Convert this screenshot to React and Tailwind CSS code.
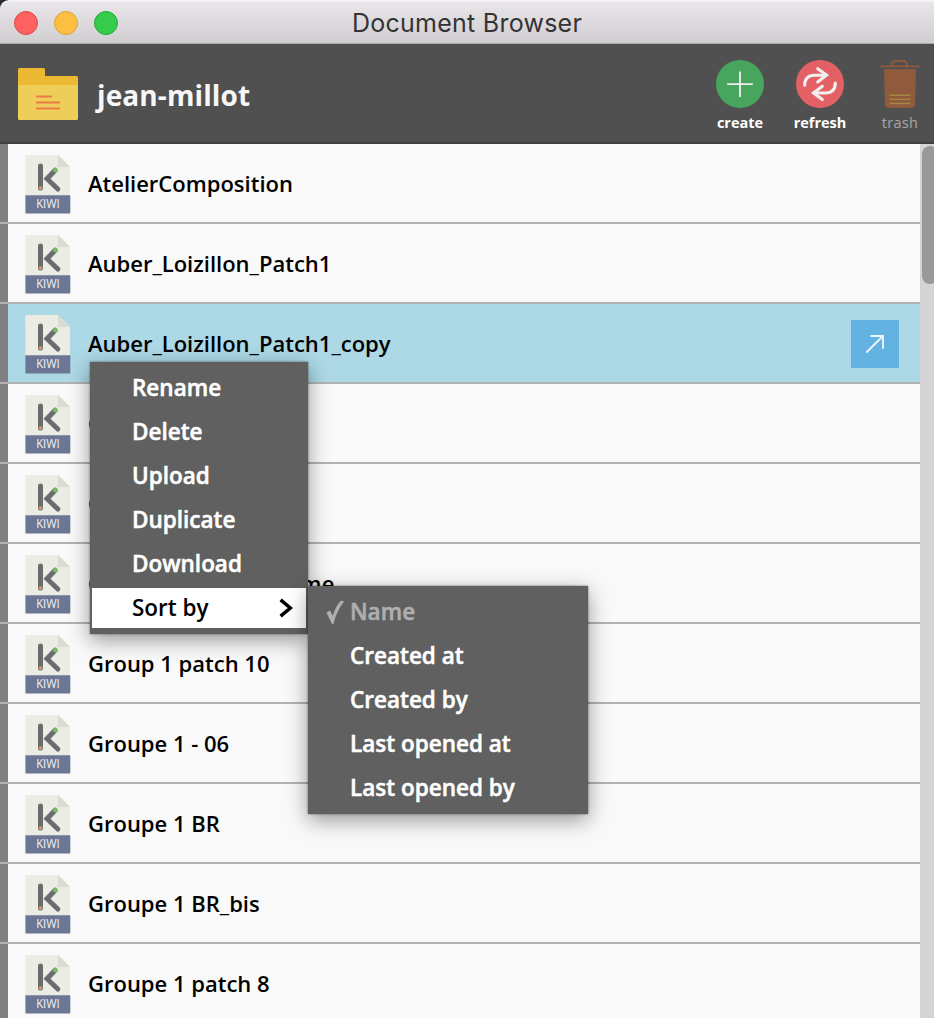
const files = [
  { name: "AtelierComposition" },
  { name: "Auber_Loizillon_Patch1" },
  { name: "Auber_Loizillon_Patch1_copy", selected: true },
  { name: "Group 1" },
  { name: "Group 1" },
  { name: "Group 1 guitar volume", wide: true },
  { name: "Group 1 patch 10" },
  { name: "Groupe 1 - 06" },
  { name: "Groupe 1 BR" },
  { name: "Groupe 1 BR_bis" },
  { name: "Groupe 1 patch 8" },
];

function FolderIcon() {
  return (
    <svg width="60" height="52" viewBox="0 0 60 52" className="block shrink-0">
      <path d="M1.5 0H25.5Q27 0 27 1.5V8H58.5Q60 8 60 9.5V20H0V1.5Q0 0 1.5 0Z" fill="#ebb932" />
      <path d="M0 17H60V50.5Q60 52 58.5 52H1.5Q0 52 0 50.5Z" fill="#eecd58" />
      <path d="M18.8 28.4H33.2M18.8 34.6H41.2M18.8 40.6H41.2" stroke="#ee7b46" strokeWidth="2" strokeLinecap="round" />
    </svg>
  );
}

function CreateIcon() {
  return (
    <svg width="48" height="48" viewBox="0 0 48 48" className="block">
      <circle cx="24" cy="24" r="24" fill="#48a55d" />
      <path d="M24 11.5V37M11.2 24.2H36.8" stroke="#efefef" strokeWidth="1.8" />
    </svg>
  );
}

function RefreshIcon() {
  return (
    <svg width="48" height="48" viewBox="0 0 48 48" className="block">
      <circle cx="24" cy="24" r="24" fill="#e36164" />
      <g fill="none" stroke="#efefef" strokeWidth="3.1" strokeLinecap="round">
        <path d="M8.7 25.2Q8.8 15.3 18.5 15.2H30" />
        <path d="M21.7 8.7L30.5 15L21.7 22" />
        <path d="M39.3 23Q39.2 32.9 29.5 33H18" />
        <path d="M26.3 26.2L17.5 33L26.3 39.5" />
      </g>
    </svg>
  );
}

function TrashIcon() {
  return (
    <svg width="40" height="48" viewBox="0 0 40 48" className="block">
      <path d="M.6 6.3H39.4M11.5 6V5Q11.8 1 15.6 1H23.2Q26.6 1 26.8 5V6" fill="none" stroke="#905a3c" strokeWidth="1.8" />
      <path d="M4 9.3H36L35 44.5Q34.9 48 31.5 48H8.5Q5.1 48 5 44.5Z" fill="#905a3c" />
      <path d="M10 35.3H30M10 39.4H30M10 43.5H30" stroke="#a28742" strokeWidth="1.4" strokeLinecap="round" />
    </svg>
  );
}

function KiwiIcon() {
  return (
    <svg width="46" height="59" viewBox="0 0 46 59" className="block shrink-0">
      <path d="M1 0H33L45 12V41H.4V1Q.4 0 1 0Z" fill="#ebece3" />
      <path d="M33 0V12H45Z" fill="#dadbd1" />
      <path d="M.4 40.3H45.3V57.4Q45.3 58.6 44.1 58.6H1.6Q.4 58.6 .4 57.4Z" fill="#6b7794" />
      <path d="M15.5 11V33M30.2 15.2L22 23.7L32.8 34" fill="none" stroke="#6a6c6d" strokeWidth="5" strokeLinecap="round" />
      <circle cx="15.6" cy="33" r="1.8" fill="#f0945c" />
      <circle cx="30.3" cy="15.2" r="2.2" fill="#72c35b" />
      <text x="22.9" y="53.1" textAnchor="middle" textLength="23.5" lengthAdjust="spacingAndGlyphs" fill="#f3f4f7" fontFamily="Open Sans, sans-serif" fontSize="12">KIWI</text>
    </svg>
  );
}

function Tool({ icon, label, className }) {
  return (
    <div className={"flex w-20 flex-col items-center " + className}>
      {icon}
      <span className="mt-[5px] text-[14.5px] leading-[20px]">{label}</span>
    </div>
  );
}

function FileRow({ name, selected, wide }) {
  return (
    <div className="flex h-20 shrink-0 border-b-2 border-[#b2b2b2]">
      <div className="w-2 shrink-0 bg-[#808080]" />
      <div className={"flex flex-1 items-start pt-[11px] pl-[17px] " + (selected ? "bg-[#add8e6]" : "bg-[#f9f9f9]")}>
        <KiwiIcon />
        <span className={"mt-[13px] ml-[17px] flex-1 whitespace-nowrap text-[22px] leading-[30px] font-semibold text-black " + (wide ? "tracking-[0.4px]" : "")}>{name}</span>
        {selected && (
          <div className="mt-[5px] mr-[21px] h-12 w-12 bg-[#63b3e2]">
            <svg width="48" height="48" viewBox="0 0 48 48" className="block">
              <path d="M15.3 32.5L32 16M19.5 16H32V28.7" fill="none" stroke="#eef6fb" strokeWidth="1.9" />
            </svg>
          </div>
        )}
      </div>
    </div>
  );
}

export default function App() {
  return (
    <div className="relative flex h-[1018px] w-[934px] flex-col overflow-hidden bg-[#2a2c38] font-['Open_Sans',sans-serif]">
      <div className="relative flex h-11 shrink-0 items-center rounded-tl-[9px] border-t-2 border-b border-t-[#f3f1f3] border-b-[#aaa9aa] bg-linear-to-b from-[#e8e6e8] to-[#d0ced0]">
        <div className="ml-[14px] flex gap-4">
          <span className="h-6 w-6 rounded-full border border-[#e2484a] bg-[#fd6260]" />
          <span className="h-6 w-6 rounded-full border border-[#dfa03a] bg-[#fdbf41]" />
          <span className="h-6 w-6 rounded-full border border-[#26a935] bg-[#35cb4b]" />
        </div>
        <span className="ml-[234px] whitespace-nowrap font-[Inter,sans-serif] text-[25px] leading-8 tracking-[0.25px] text-[#353335]">Document Browser</span>
      </div>
      <header className="flex h-[100px] shrink-0 items-start border-b-2 border-[#3f3f3f] bg-[#505050] pl-[18px]">
        <div className="mt-6"><FolderIcon /></div>
        <h1 className="mt-[31px] ml-[19px] flex-1 text-[28px] leading-[40px] font-bold tracking-[0.1px] text-[#f7f7f7]">jean-millot</h1>
        <div className="mr-[-6px] flex pt-4">
          <Tool icon={<CreateIcon />} label="create" className="font-bold text-white" />
          <Tool icon={<RefreshIcon />} label="refresh" className="font-bold text-white" />
          <Tool icon={<TrashIcon />} label="trash" className="tracking-[0.3px] text-[#a7a7a7]" />
        </div>
      </header>
      <div className="flex min-h-0 flex-1">
        <main className="flex w-[920px] flex-col overflow-hidden">
          {files.map((file, i) => <FileRow key={i} {...file} />)}
        </main>
        <div className="w-[14px] bg-[#d4d4d4] pt-[2px] pl-[2px]">
          <div className="h-[138px] w-4 rounded-lg bg-[#999999]" />
        </div>
      </div>

      <div className="absolute top-[362px] left-[90px] w-[218px] bg-[#606060] px-[2px] pt-[6px] pb-[6px] text-[22.5px] font-semibold text-white shadow-[0_6px_20px_rgba(0,0,0,0.4),0_0_2px_rgba(0,0,0,0.5)]">
        {["Rename", "Delete", "Upload", "Duplicate", "Download"].map((t) => (
          <div key={t} className="mb-[4px] flex h-10 items-center pl-10 [-webkit-text-stroke:0.5px_white]">{t}</div>
        ))}
        <div className="flex h-10 items-center justify-between bg-white pr-[13px] pl-10 text-black">
          Sort by
          <svg width="14" height="20" viewBox="0 0 14 20"><path d="M1.6 1.8L11.4 10L1.6 18.2" fill="none" stroke="black" strokeWidth="3.5" /></svg>
        </div>
      </div>
      <div className="absolute top-[586px] left-[308px] h-[228px] w-[280px] bg-[#606060] pt-[6px] text-[22.5px] font-semibold text-white shadow-[0_6px_20px_rgba(0,0,0,0.4),0_0_2px_rgba(0,0,0,0.5)]">
        <div className="mb-1 flex h-10 items-center text-[#afafaf] [-webkit-text-stroke:0.5px_#afafaf]">
          <svg width="18" height="24" viewBox="0 0 18 24" className="ml-[18px] mr-[6px]"><path d="M.4 12.5L4 10.5L6.8 15.7Q9.6 6 15.2 .4L18 1.5Q10.2 11.5 7.5 24H6Z" fill="currentColor" /></svg>
          Name
        </div>
        {["Created at", "Created by", "Last opened at", "Last opened by"].map((t) => (
          <div key={t} className="mb-1 flex h-10 items-center pl-[42px] [-webkit-text-stroke:0.5px_white]">{t}</div>
        ))}
      </div>
    </div>
  );
}
